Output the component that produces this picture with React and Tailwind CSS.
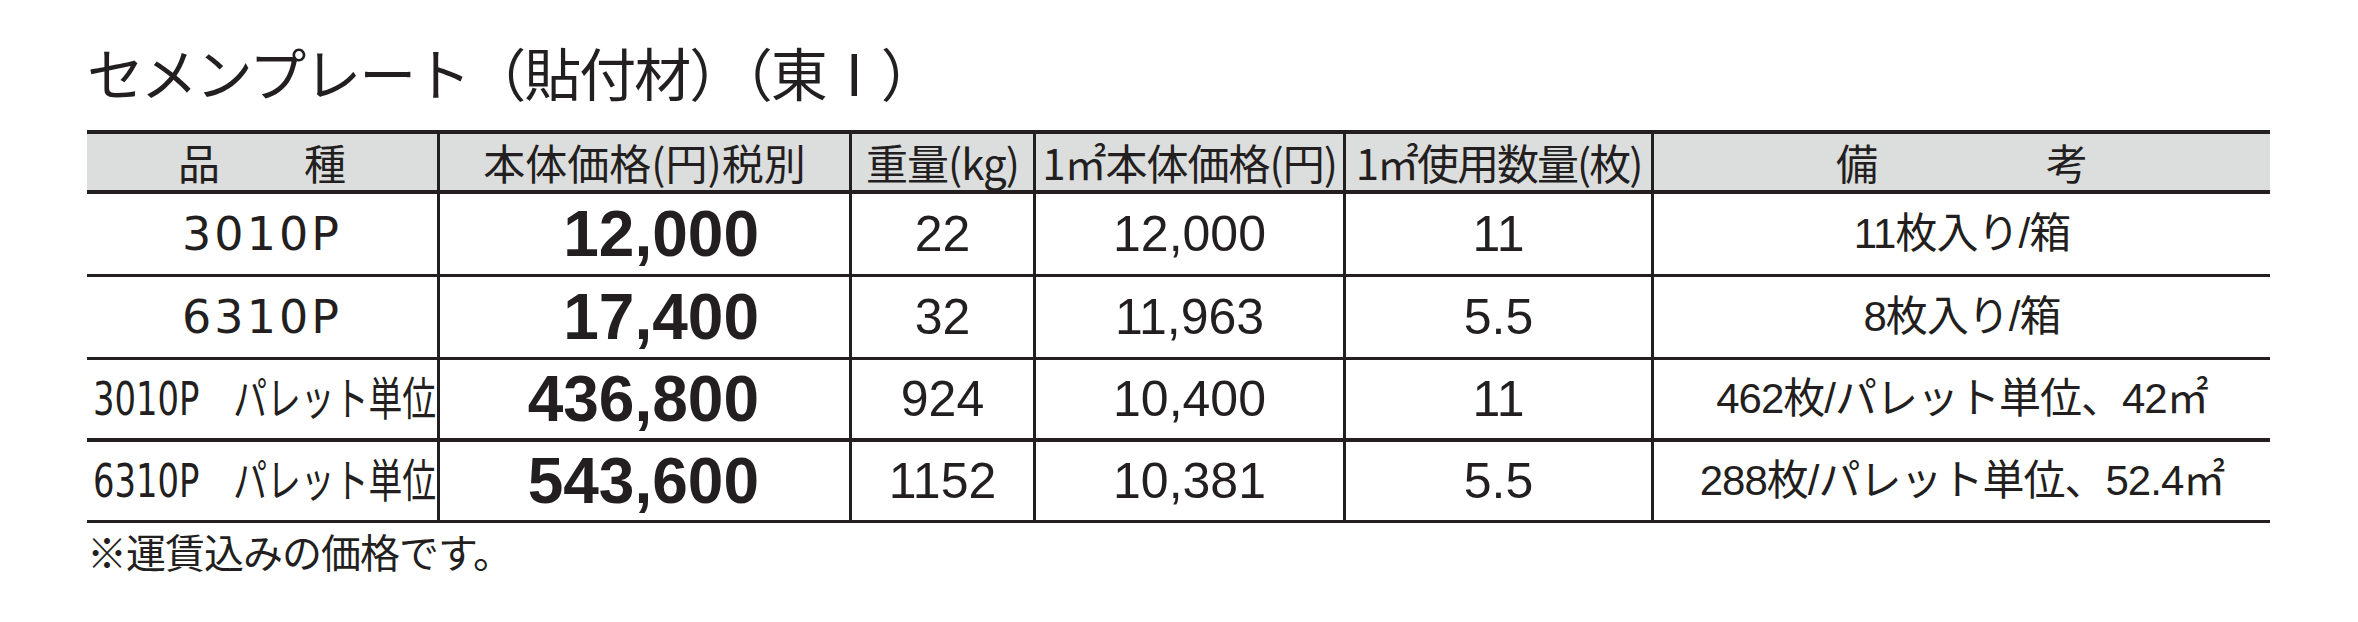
const rows = [
  { name: "3010P", pallet: false, price: "12,000", kg: "22", unit: "12,000", count: "11", note: "11枚入り/箱", line: "h-[83px] border-b-[3px]" },
  { name: "6310P", pallet: false, price: "17,400", kg: "32", unit: "11,963", count: "5.5", note: "8枚入り/箱", line: "h-[83px] border-b-[3px]" },
  { name: "3010P", pallet: true, price: "436,800", kg: "924", unit: "10,400", count: "11", note: "462枚/パレット単位、42㎡", line: "h-[82px] border-b-[4px]" },
  { name: "6310P", pallet: true, price: "543,600", kg: "1152", unit: "10,381", count: "5.5", note: "288枚/パレット単位、52.4㎡", line: "h-[81px] border-b-[3px]" },
];

const cols = "grid grid-cols-[350px_412px_184px_310px_308px_619px]";
const cell = "flex items-center justify-center border-l-[3px] border-[#231f20]";
const jp = "font-['Noto_Sans_CJK_JP',sans-serif]";
const num = "font-['Liberation_Sans','Noto_Sans_CJK_JP',sans-serif]";

const App = () => {
  return (
    <div className="w-[2358px] h-[622px] bg-white text-[#231f20] pl-[87px] pt-[43px]">
      <h1 className={`${jp} text-[57px] leading-[57px] h-[57px] tracking-[-2px] font-normal whitespace-nowrap`}>
        セメンプレート（貼付材）（東Ⅰ）
      </h1>

      <div className="mt-[30px] w-[2183px] border-t-[4px] border-[#231f20]">
        <div className={`${cols} ${jp} h-[60px] border-b-[4px] border-[#231f20] bg-[#dcdddd] text-[42px] leading-none whitespace-nowrap`}>
          <div className="flex items-center justify-center">品　　種</div>
          <div className={cell}>本体価格(円)税別</div>
          <div className={`${cell} tracking-[-1px]`}>重量(kg)</div>
          <div className={`${cell} tracking-[-1px]`}>1㎡本体価格(円)</div>
          <div className={`${cell} tracking-[-2px]`}>1㎡使用数量(枚)</div>
          <div className={cell}>備　　　　考</div>
        </div>

        {rows.map((r, i) => (
          <div key={i} className={`${cols} ${r.line} border-[#231f20] whitespace-nowrap`}>
            {r.pallet ? (
              <div className="flex items-center pl-[6px] overflow-visible">
                <span className="inline-block origin-left scale-x-[0.735] font-['DejaVu_Sans','Noto_Sans_CJK_JP',sans-serif] text-[46px] leading-none">
                  {r.name}　パレット単位
                </span>
              </div>
            ) : (
              <div className="flex items-center justify-center font-['DejaVu_Sans',sans-serif] text-[46px] leading-none tracking-[3px]">
                {r.name}
              </div>
            )}
            <div className={`${cell} justify-end! pr-[90px] ${num} font-bold text-[64px] leading-none`}>
              {r.price}
            </div>
            <div className={`${cell} ${num} text-[50px] leading-none`}>{r.kg}</div>
            <div className={`${cell} ${num} text-[50px] leading-none`}>{r.unit}</div>
            <div className={`${cell} ${num} text-[50px] leading-none`}>{r.count}</div>
            <div className={`${cell} ${num} text-[42px] leading-none tracking-[-1px]`}>{r.note}</div>
          </div>
        ))}
      </div>

      <p className={`${jp} mt-[8px] text-[40px] leading-none tracking-[-1px]`}>※運賃込みの価格です。</p>
    </div>
  );
};

export default App;
